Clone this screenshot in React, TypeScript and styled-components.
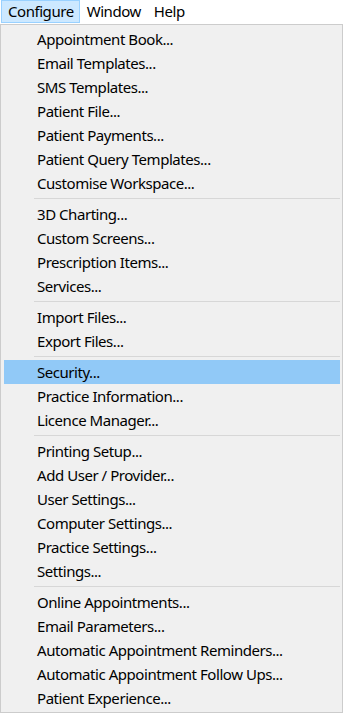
import styled, { createGlobalStyle } from 'styled-components';

const GlobalStyle = createGlobalStyle`
  html, body {
    margin: 0;
    padding: 0;
    background: #ffffff;
  }
  body {
    font-family: "Noto Sans", "Open Sans", sans-serif;
    font-size: 15px;
    letter-spacing: -0.45px;
    color: #000000;
  }
`;

const StyledPage = styled.div`
  width: 343px;
  height: 713px;
  display: flex;
  flex-direction: column;
  overflow: hidden;
`;

const StyledMenuBar = styled.div`
  height: 24px;
  display: flex;
  align-items: flex-start;
  background: #ffffff;
  padding-left: 1px;
`;

const StyledTopItem = styled.div<{ $open?: boolean }>`
  height: 21px;
  padding: 0 5px 0 6px;
  display: flex;
  align-items: center;
  border: 1px solid ${({ $open }) => ($open ? '#99d1ff' : 'transparent')};
  background: ${({ $open }) => ($open ? '#cce8ff' : 'transparent')};
  line-height: 1;
`;

const StyledDropdown = styled.div`
  flex: 1;
  display: flex;
  flex-direction: column;
  background: #f0f0f0;
  border: 1px solid #cccccc;
  padding: 2px;
`;

const StyledItem = styled.div<{ $active?: boolean }>`
  height: 24px;
  display: flex;
  align-items: center;
  padding-left: 33px;
  margin-left: 1px;
  background: ${({ $active }) => ($active ? '#91c9f7' : 'transparent')};
  white-space: nowrap;
`;

const StyledSeparator = styled.div`
  height: 7px;
  display: flex;
  align-items: center;
  padding-left: 31px;

  &::after {
    content: '';
    flex: 1;
    height: 1px;
    background: #d7d7d7;
  }
`;

const groups: string[][] = [
  [
    'Appointment Book...',
    'Email Templates...',
    'SMS Templates...',
    'Patient File...',
    'Patient Payments...',
    'Patient Query Templates...',
    'Customise Workspace...',
  ],
  ['3D Charting...', 'Custom Screens...', 'Prescription Items...', 'Services...'],
  ['Import Files...', 'Export Files...'],
  ['Security...', 'Practice Information...', 'Licence Manager...'],
  [
    'Printing Setup...',
    'Add User / Provider...',
    'User Settings...',
    'Computer Settings...',
    'Practice Settings...',
    'Settings...',
  ],
  [
    'Online Appointments...',
    'Email Parameters...',
    'Automatic Appointment Reminders...',
    'Automatic Appointment Follow Ups...',
    'Patient Experience...',
  ],
];

export default function App() {
  return (
    <>
      <GlobalStyle />
      <StyledPage>
        <StyledMenuBar>
          <StyledTopItem $open>Configure</StyledTopItem>
          <StyledTopItem>Window</StyledTopItem>
          <StyledTopItem>Help</StyledTopItem>
        </StyledMenuBar>
        <StyledDropdown>
          {groups.map((group, gi) => (
            <div key={gi}>
              {gi > 0 && <StyledSeparator />}
              {group.map((label) => (
                <StyledItem key={label} $active={label === 'Security...'}>
                  {label}
                </StyledItem>
              ))}
            </div>
          ))}
        </StyledDropdown>
      </StyledPage>
    </>
  );
}
